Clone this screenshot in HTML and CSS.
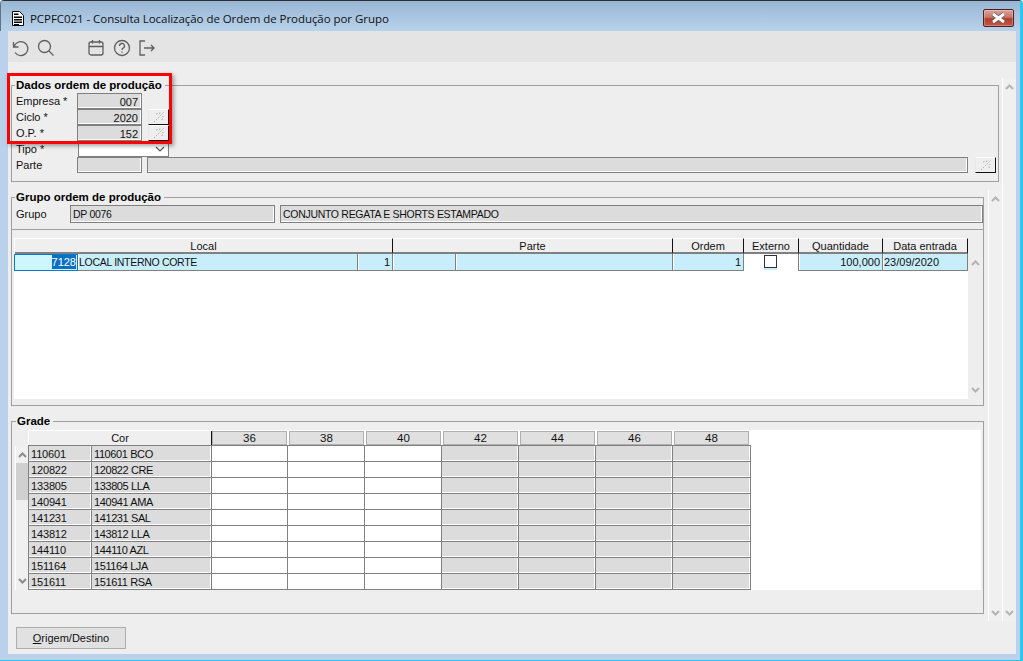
FILE: index.html
```html
<!DOCTYPE html>
<html lang="pt-BR">
<head>
<meta charset="utf-8">
<title>PCPFC021</title>
<link rel="stylesheet" href="styles.css">
</head>
<body>
<svg class="defs" width="0" height="0" aria-hidden="true">
  <symbol id="wand" viewBox="0 0 12 12"><path d="M1 11 11 1M3 3l5-1M9 9l1-4" fill="none" stroke="#a8a8a8" stroke-width="1" stroke-dasharray="1.5 1.5"/></symbol>
  <symbol id="up" viewBox="0 0 9 6"><path d="M1 5l3.5-3.5L8 5" fill="none" stroke="currentColor" stroke-width="2"/></symbol>
  <symbol id="down" viewBox="0 0 9 6"><path d="M1 1l3.5 3.5L8 1" fill="none" stroke="currentColor" stroke-width="2"/></symbol>
</svg>
<div class="window">
  <header class="titlebar">
    <svg class="doc" width="14" height="17" viewBox="0 0 14 17"><path d="M1.5 1.500h7l4 4v10h-11z" fill="#fff" stroke="#000"/><path d="M3 3.500h4.500v1.500H3zM3 6.500h8V8H3zM3 9h8v1.500H3zM3 11.500h8V13H3zM3 14h5v1H3z" fill="#000"/></svg>
    <span class="title">PCPFC021 - Consulta Localização de Ordem de Produção por Grupo</span>
    <button class="close" type="button" aria-label="Fechar"><svg width="17" height="12" viewBox="0 0 17 12"><path d="M3 2l11 8M14 2L3 10" fill="none" stroke="#5d5d5d" stroke-width="4.500"/><path d="M3 2l11 8M14 2L3 10" fill="none" stroke="#fff" stroke-width="2.800"/></svg></button>
  </header>
  <nav class="toolbar">
    <svg class="tool" viewBox="0 0 18 18"><path d="M2.500 3v5h5M3 8a7 7 0 1 1 1 5.500"/></svg>
    <svg class="tool" viewBox="0 0 18 18"><circle cx="7.500" cy="7.500" r="6"/><path d="M12 12l4.500 4.500"/></svg>
    <svg class="tool tool-far" viewBox="0 0 18 18"><rect x="2" y="3" width="14" height="13" rx="2"/><path d="M2 7.500h14M5.500 1v3.500M12.500 1v3.500"/></svg>
    <svg class="tool" viewBox="0 0 18 18"><circle cx="9" cy="9" r="7.500"/><path d="M6.500 7a2.500 2.500 0 1 1 3.600 2.200c-.8.400-1.100.9-1.100 1.800M9 12.500v1.200"/></svg>
    <svg class="tool" viewBox="0 0 18 18"><path d="M7 2H2v14h5M6 9h10M13 6l3 3-3 3"/></svg>
  </nav>

  <main class="content">
    <div class="upper">
      <div class="stack">
        <fieldset class="group g1">
          <legend>Dados ordem de produção</legend>
          <div class="row"><span class="lbl">Empresa *</span><span class="field num w65">007</span></div>
          <div class="row"><span class="lbl">Ciclo *</span><span class="field num w65">2020</span><button class="pick" type="button"><svg width="12" height="12"><use href="#wand"/></svg></button></div>
          <div class="row"><span class="lbl">O.P. *</span><span class="field num w65">152</span><button class="pick" type="button"><svg width="12" height="12"><use href="#wand"/></svg></button></div>
          <div class="row"><span class="lbl">Tipo *</span><span class="select"><svg width="10" height="6" viewBox="0 0 10 6"><path d="M1 1l4 4 4-4" fill="none" stroke="#555" stroke-width="1.200"/></svg></span></div>
          <div class="row"><span class="lbl">Parte</span><span class="field w65"></span><span class="field wide"></span><button class="pick pick-end" type="button"><svg width="12" height="12"><use href="#wand"/></svg></button></div>
        </fieldset>

        <div class="lower">
          <div class="mid">
            <fieldset class="group g2">
              <legend>Grupo ordem de produção</legend>
              <div class="row-g2"><span class="lbl lbl-g2">Grupo</span><span class="field tall w205 caps">DP 0076</span><span class="field tall grow caps">CONJUNTO REGATA E SHORTS ESTAMPADO</span></div>
            </fieldset>

            <section class="panel">
              <div class="locais">
                <div class="hd span3">Local</div>
                <div class="hd span2">Parte</div>
                <div class="hd">Ordem</div>
                <div class="hd">Externo</div>
                <div class="hd">Quantidade</div>
                <div class="hd">Data entrada</div>
                <div class="td focus"><span class="sel">7128</span></div>
                <div class="td caps">LOCAL INTERNO CORTE</div>
                <div class="td right">1</div>
                <div class="td"></div>
                <div class="td"></div>
                <div class="td right">1</div>
                <div class="td check"><span class="box"></span></div>
                <div class="td right">100,000</div>
                <div class="td">23/09/2020</div>
              </div>
              <div class="strip strip-table"><svg width="9" height="6"><use href="#up"/></svg><svg width="9" height="6"><use href="#down"/></svg></div>
            </section>

            <fieldset class="group g3">
              <legend>Grade</legend>
              <div class="grade-wrap">
                <div class="vscroll"><svg width="9" height="6"><use href="#up"/></svg><span class="thumb"></span><svg width="9" height="6"><use href="#down"/></svg></div>
                <div class="grade">
                  <div class="gh-cor">Cor</div><div class="gh">36</div><div class="gh">38</div><div class="gh">40</div><div class="gh">42</div><div class="gh">44</div><div class="gh">46</div><div class="gh">48</div>

                  <div class="gc grey first">110601</div><div class="gc grey">110601 BCO</div><div class="gc"></div><div class="gc"></div><div class="gc"></div><div class="gc grey"></div><div class="gc grey"></div><div class="gc grey"></div><div class="gc grey"></div>
                  <div class="gc grey first">120822</div><div class="gc grey">120822 CRE</div><div class="gc"></div><div class="gc"></div><div class="gc"></div><div class="gc grey"></div><div class="gc grey"></div><div class="gc grey"></div><div class="gc grey"></div>
                  <div class="gc grey first">133805</div><div class="gc grey">133805 LLA</div><div class="gc"></div><div class="gc"></div><div class="gc"></div><div class="gc grey"></div><div class="gc grey"></div><div class="gc grey"></div><div class="gc grey"></div>
                  <div class="gc grey first">140941</div><div class="gc grey">140941 AMA</div><div class="gc"></div><div class="gc"></div><div class="gc"></div><div class="gc grey"></div><div class="gc grey"></div><div class="gc grey"></div><div class="gc grey"></div>
                  <div class="gc grey first">141231</div><div class="gc grey">141231 SAL</div><div class="gc"></div><div class="gc"></div><div class="gc"></div><div class="gc grey"></div><div class="gc grey"></div><div class="gc grey"></div><div class="gc grey"></div>
                  <div class="gc grey first">143812</div><div class="gc grey">143812 LLA</div><div class="gc"></div><div class="gc"></div><div class="gc"></div><div class="gc grey"></div><div class="gc grey"></div><div class="gc grey"></div><div class="gc grey"></div>
                  <div class="gc grey first">144110</div><div class="gc grey">144110 AZL</div><div class="gc"></div><div class="gc"></div><div class="gc"></div><div class="gc grey"></div><div class="gc grey"></div><div class="gc grey"></div><div class="gc grey"></div>
                  <div class="gc grey first">151164</div><div class="gc grey">151164 LJA</div><div class="gc"></div><div class="gc"></div><div class="gc"></div><div class="gc grey"></div><div class="gc grey"></div><div class="gc grey"></div><div class="gc grey"></div>
                  <div class="gc grey first">151611</div><div class="gc grey">151611 RSA</div><div class="gc"></div><div class="gc"></div><div class="gc"></div><div class="gc grey"></div><div class="gc grey"></div><div class="gc grey"></div><div class="gc grey"></div>
                </div>
              </div>
            </fieldset>
          </div>
          <div class="strip strip-inner"><svg width="9" height="6"><use href="#up"/></svg><svg width="9" height="6"><use href="#down"/></svg></div>
        </div>
      </div>
      <div class="strip strip-outer"><svg width="9" height="6"><use href="#up"/></svg><svg width="9" height="6"><use href="#down"/></svg></div>
    </div>
    <footer class="footer"><button class="action" type="button"><u>O</u>rigem/Destino</button></footer>
  </main>
  <div class="highlight" aria-hidden="true"></div>
</div>
</body>
</html>
```

FILE: styles.css
```css
* { box-sizing: border-box; }
html, body { margin: 0; padding: 0; background: #fff; }
body { width: 1023px; height: 661px; overflow: hidden; font: 11px/14px "Liberation Sans", Arial, sans-serif; color: #111; }
.defs { position: absolute; }

.window { position: relative; width: 1023px; height: 661px; display: flex; flex-direction: column; background: #b9d1ea; border-top: 1px solid #2b2f33; border-right: 3px solid #2cc6ee; border-bottom: 1px solid #2cc6ee; border-radius: 4px 4px 0 0; overflow: hidden; }

.titlebar { height: 30px; flex: none; display: flex; align-items: center; padding: 0 7px 0 11px; margin-right: -1px; background: linear-gradient(#98b6d4, #b9d2ea); box-shadow: inset 1px 0 0 #5f7489; }
.doc { flex: none; margin-top: 5px; }
.title { margin: 6px 0 0 5px; font: 11.5px/16px "Open Sans", sans-serif; letter-spacing: -.05px; color: #111; }
.close { margin-left: auto; width: 31px; height: 18px; margin-top: 3px; padding: 0; display: flex; align-items: center; justify-content: center; border: 1px solid #4e2028; border-radius: 2px; background: linear-gradient(#d9a49a 0, #c9766a 45%, #b23d2c 55%, #c25a45 100%); box-shadow: inset 0 0 0 1px rgba(255,255,255,.25); }

.toolbar { height: 31px; flex: none; margin: 0 4px 0 8px; padding: 2px 0 0 3px; display: flex; align-items: center; gap: 7.5px; background: #e4e4e4; }
.tool { width: 18px; height: 18px; fill: none; stroke: #5f5f5f; stroke-width: 1.300; }
.tool-far { margin-left: 25px; }

.content { flex: 1; margin: 0 4px 6px 8px; padding-left: 3px; background: #eee; display: flex; flex-direction: column; }
.upper { display: flex; flex: none; }
.stack { width: 991px; flex: none; }

.group { margin: 0; padding: 0; min-width: 0; border: 1px solid #a0a0a0; }
.group legend { height: 14px; margin-left: -1px; padding: 0 3px 0 1px; font: bold 11.5px/14px "Liberation Sans", Arial, sans-serif; color: #000; }

.g1 { width: 988px; margin-top: 16px; padding: 1px 0 8px 4px; }
.row { display: flex; height: 16px; align-items: stretch; }
.lbl { width: 61px; flex: none; line-height: 17px; }
.field { height: 16px; padding: 0 3px; line-height: 17px; background: #dcdcdc; border: 1px solid #7f7f7f; box-shadow: inset -1px -1px 0 #fff; white-space: nowrap; overflow: hidden; }
.num { text-align: right; }
.w65 { width: 65px; flex: none; }
.wide { width: 821px; flex: none; margin-left: 5px; }
.pick { width: 21px; height: 16px; margin-left: 6px; padding: 0; display: flex; align-items: center; justify-content: center; background: #eee; border: 1px solid; border-color: #fff #111 #111 #e8e8e8; }
.pick-end { margin-left: 7px; }
.select { width: 91px; height: 16px; margin-left: 1px; display: flex; align-items: center; justify-content: flex-end; padding-right: 3px; background: #fff; border: 1px solid #808080; }

.lower { display: flex; margin-top: 8px; gap: 4px; }
.mid { width: 973px; flex: none; }
.strip { display: flex; flex-direction: column; justify-content: space-between; align-items: center; color: #b4b4b4; background: #f0f0f0; border-left: 1px solid #fff; }
.strip-inner { width: 14px; height: 431px; padding: 6px 0 5px; }
.strip-outer { width: 14px; height: 543px; margin-top: 16px; padding: 6px 0 5px; }
.strip-table { width: 15px; height: 145px; margin-top: 16px; padding: 6px 0 6px; background: #eee; border-left: 0; }

.g2 { padding: 1px 0 6px 4px; }
.row-g2 { display: flex; align-items: center; }
.lbl-g2 { width: 54px; line-height: 15px; }
.tall { height: 18px; line-height: 16px; padding: 0 2px; }
.w205 { width: 205px; flex: none; }
.grow { flex: none; width: 703px; margin-left: 5px; }
.caps { font-size: 10.5px; letter-spacing: -.3px; }

.panel { height: 176px; display: flex; align-items: flex-start; padding: 8px 0 0 2px; border: 1px solid #a0a0a0; border-top: 0; }
.locais { width: 954px; height: 161px; flex: none; display: grid; grid-template-columns: 64px 280px 35px 63px 217px 71px 55px 84px 85px; grid-template-rows: 16px 17px; align-content: start; background: #fff; }
.hd { line-height: 15px; text-align: center; background: #efefef; border-top: 1px solid #fff; border-bottom: 2px solid #808080; border-right: 1px solid #111; }
.span3 { grid-column: span 3; margin-left: 1px; }
.span2 { grid-column: span 2; }
.td { padding: 0 2px 0 1px; line-height: 17px; background: #c8eefc; border-right: 1px solid #808080; border-bottom: 1px solid #808080; box-shadow: inset 1px 0 0 #fff; white-space: nowrap; overflow: hidden; }
.right { text-align: right; }
.focus { text-align: right; padding-right: 1px; line-height: 15px; background: #cdf6ff; border: 1px solid #0a78d0; box-shadow: none; }
.sel { background: #0a70c4; color: #fff; display: inline-block; height: 14px; }
.check { display: flex; justify-content: center; background: #fff; border-bottom: 0; box-shadow: none; padding: 0; }
.box { width: 13px; height: 13px; margin: 1px 0 0 -2px; background: #fff; border: 1px solid #333; box-shadow: 0 2px 0 #c8eefc; }

.g3 { margin-top: 8px; padding: 2px 2px 23px 3px; }
.g3 legend { margin-left: 1px; }
.grade-wrap { display: flex; }
.vscroll { width: 13px; height: 144px; margin-top: 16px; display: flex; flex-direction: column; align-items: center; color: #8c8c8c; padding-top: 6px; background: #f0f0f0; border-left: 1px solid #fff; }
.vscroll svg:last-child { margin-top: auto; margin-bottom: 6px; }
.thumb { width: 12px; height: 37px; margin-top: 5px; background: #d0d0d0; }
.grade { width: 953px; height: 160px; display: grid; grid-template-columns: 64px 120px 76px repeat(5, 77px) 78px; grid-auto-rows: 16px; align-content: start; background: #fff; }
.gh-cor { grid-column: span 2; margin: 1px 0 0 1px; line-height: 14px; text-align: center; background: #efefef; border-right: 1px solid #111; }
.gh { margin: 1px; line-height: 13px; text-align: center; font-size: 11.5px; background: #e0e0e0; border: 1px solid #b0b0b0; }
.gh-cor + .gh { margin-left: 0; }
.gh:nth-child(8) { margin-right: 2px; }
.gc { padding: 0 2px; line-height: 17px; background: #fff; border-right: 1px solid #808080; border-bottom: 1px solid #808080; box-shadow: 0 -1px 0 #808080; white-space: nowrap; overflow: hidden; }
.gc:not(.first) { letter-spacing: -.4px; }
.grey { background: #dcdcdc; box-shadow: 0 -1px 0 #808080, inset -1px -1px 0 #fff; }
.first { border-left: 1px solid #808080; padding-left: 2px; letter-spacing: -.15px; }

.footer { padding: 6px 0 0 5px; }
.action { width: 110px; height: 22px; padding: 0; font: 11px/14px "Liberation Sans", Arial, sans-serif; color: #111; background: #e1e1e1; border: 1px solid #adadad; }

.highlight { position: absolute; left: 7px; top: 72px; width: 165px; height: 71px; border: 3px solid #f00; box-shadow: 2px 2px 4px rgba(0,0,0,.35); }
```
